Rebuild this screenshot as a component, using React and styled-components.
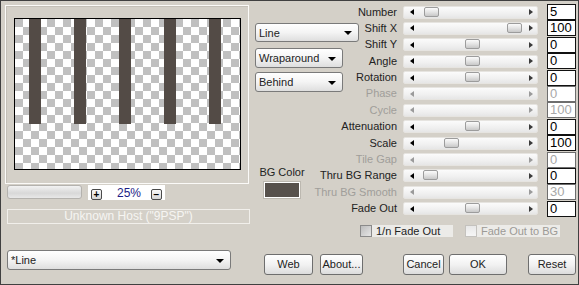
import React from "react";
import styled, { createGlobalStyle } from "styled-components";

const GlobalStyle = createGlobalStyle`
  html, body { margin: 0; padding: 0; background: #d4d0c8; }
  body {
    font-family: "Liberation Sans", Arial, sans-serif;
    font-size: 11px;
    color: #000;
  }
  * { box-sizing: border-box; }
`;

const Window = styled.div`
  width: 579px;
  height: 285px;
  border: 1px solid #404040;
  background: #d4d0c8;
  padding: 3px 2px 0 4px;
  display: flex;
  flex-direction: column;
`;

const Top = styled.div`
  display: flex;
  height: 246px;
`;

// ---------- left: preview ----------

const LeftCol = styled.div`
  width: 246px;
  flex: none;
  padding-top: 1px;
  display: flex;
  flex-direction: column;
`;

const PreviewFrame = styled.div`
  width: 244px;
  height: 179px;
  border: 1px solid #fbfaf8;
  box-shadow: inset 1px 1px 0 #c4c0b8;
  padding: 12px 0 0 8px;
`;

const Canvas = styled.div`
  width: 227px;
  height: 152px;
  border: 1px solid #000;
  svg { display: block; }
`;

const ZoomRow = styled.div`
  display: flex;
  height: 15px;
  margin: 1px 0 0 2px;
`;

const ZoomTrack = styled.div`
  width: 75px;
  height: 14px;
  border: 1px solid #b4b2ae;
  border-radius: 3px;
  background: linear-gradient(#f2f2f2, #d8d8d8 60%, #e8e8e8);
`;

const ZoomBox = styled.div`
  width: 77px;
  margin-left: 6px;
  background: #fff;
  display: flex;
  align-items: center;
  padding-left: 3px;
`;

const TinyButton = styled.div`
  width: 11px;
  height: 11px;
  align-self: flex-end;
  border: 1px solid #4a4a4a;
  border-radius: 2px;
  background: linear-gradient(#fafafa, #d6d6d6);
  font-size: 10px;
  font-weight: bold;
  line-height: 9px;
  text-align: center;
`;

const ZoomValue = styled.span`
  color: #1c1c86;
  font-size: 12px;
  margin-left: 15px;
  width: 34px;
`;

const HostBox = styled.div`
  width: 243px;
  height: 15px;
  margin: 9px 0 0 2px;
  border: 1px solid #f1efeb;
  color: #f6f5f2;
  font-size: 12px;
  line-height: 13px;
  text-align: center;
`;

// ---------- middle: dropdowns / bg colour ----------

const MidCol = styled.div`
  width: 105px;
  flex: none;
  margin-left: 4px;
  padding-top: 19px;
  display: flex;
  flex-direction: column;
  align-items: flex-start;
`;

const Dropdown = styled.div`
  width: ${(p) => p.$w}px;
  height: ${(p) => p.$h || 20}px;
  margin-top: ${(p) => p.$mt || 0}px;
  border: 1px solid #7a7a7a;
  border-radius: 3px;
  background: linear-gradient(#ffffff, #f4f4f4 50%, #dedede);
  display: flex;
  align-items: center;
  justify-content: space-between;
  padding: 0 6px 0 3px;
  font-size: 11px;
  color: #222;
  white-space: nowrap;
`;

const DownArrow = styled.span`
  width: 0;
  height: 0;
  border-left: 4px solid transparent;
  border-right: 4px solid transparent;
  border-top: 4px solid #000;
  margin-top: 1px;
`;

const BgGroup = styled.div`
  width: 40px;
  margin: 74px 0 0 7px;
  display: flex;
  flex-direction: column;
  align-items: center;
`;

const BgLabel = styled.div`
  font-size: 11px;
  line-height: 13px;
  color: #222;
  white-space: nowrap;
`;

const Swatch = styled.div`
  width: 36px;
  height: 16px;
  margin-top: 3px;
  border: 1px solid #fff;
  box-shadow: 0 0 0 1px #bcb8b0;
  background: ${(p) => p.$color};
`;

// ---------- right: parameters ----------

const ParamCol = styled.div`
  width: 216px;
  flex: none;
  display: flex;
  flex-direction: column;
`;

const ParamGrid = styled.div`
  display: grid;
  grid-template-columns: 37px 141px 38px;
  grid-template-rows: repeat(13, 16px);
  row-gap: 0.4px;
`;

const Label = styled.div`
  justify-self: end;
  align-self: center;
  white-space: nowrap;
  font-size: 11px;
  line-height: 13px;
  color: ${(p) => (p.$disabled ? "#a09e9a" : "#222")};
`;

const Track = styled.div`
  position: relative;
  justify-self: end;
  align-self: center;
  width: 135px;
  height: 13px;
  border: 1px solid #e6e4e0;
  border-radius: 2px;
  background: linear-gradient(#fbfbfb, #f0f0f0 60%, #e6e6e6);
  display: flex;
  align-items: center;
  justify-content: space-between;
  padding: 0 4px 0 6px;
`;

const ArrowL = styled.span`
  width: 0;
  height: 0;
  border-top: 3px solid transparent;
  border-bottom: 3px solid transparent;
  border-right: 4px solid ${(p) => (p.$disabled ? "#9a9a9a" : "#000")};
`;

const ArrowR = styled.span`
  width: 0;
  height: 0;
  border-top: 3px solid transparent;
  border-bottom: 3px solid transparent;
  border-left: 4px solid ${(p) => (p.$disabled ? "#9a9a9a" : "#3a3a3a")};
`;

const Thumb = styled.div`
  position: absolute;
  top: 0;
  width: 15px;
  height: 10px;
  border: 1px solid #9c9c9c;
  border-radius: 2px;
  background: linear-gradient(#fbfbfb, #e4e4e4 50%, #c8c8c8);
`;

const Field = styled.div`
  justify-self: end;
  align-self: center;
  width: 29px;
  height: 16px;
  background: #fff;
  border: 1px solid ${(p) => (p.$disabled ? "#6e6e6e" : "#111")};
  color: ${(p) => (p.$disabled ? "#a8a8a8" : "#000")};
  font-size: 13px;
  line-height: 14px;
  padding-left: 2px;
`;

const CheckRow = styled.div`
  display: flex;
  margin-top: 8px;
`;

const CheckItem = styled.div`
  width: ${(p) => p.$w}px;
  height: 12px;
  margin-left: ${(p) => p.$ml || 0}px;
  background: #ecebe8;
  display: flex;
  align-items: center;
  font-size: 11px;
  color: ${(p) => (p.$disabled ? "#9c9a96" : "#222")};
  white-space: nowrap;
`;

const Box = styled.span`
  width: 12px;
  height: 12px;
  flex: none;
  margin-right: 4px;
  border: 1px solid ${(p) => (p.$disabled ? "#c4c2be" : "#8a8a8a")};
  background: ${(p) =>
    p.$disabled
      ? "linear-gradient(#e8e8e8, #f6f6f6)"
      : "linear-gradient(135deg, #bcbcbc, #e6e6e6)"};
`;

// ---------- bottom ----------

const Bottom = styled.div`
  display: flex;
  align-items: flex-start;
  padding-left: 2px;
`;

const Button = styled.div`
  width: ${(p) => p.$w}px;
  height: 21px;
  margin-top: 4px;
  margin-left: ${(p) => p.$ml}px;
  border: 1px solid #6e6e6e;
  border-radius: 3px;
  background: linear-gradient(#ffffff, #f2f2f2 50%, #dcdcdc);
  font-size: 11px;
  color: #222;
  line-height: 19px;
  text-align: center;
`;

const params = [
  { label: "Number", value: "5", pos: 0.012 },
  { label: "Shift X", value: "100", pos: 1 },
  { label: "Shift Y", value: "0", pos: 0.5 },
  { label: "Angle", value: "0", pos: 0.5 },
  { label: "Rotation", value: "0", pos: 0.5 },
  { label: "Phase", value: "0", disabled: true },
  { label: "Cycle", value: "100", disabled: true },
  { label: "Attenuation", value: "0", pos: 0.5 },
  { label: "Scale", value: "100", pos: 0.25 },
  { label: "Tile Gap", value: "0", disabled: true },
  { label: "Thru BG Range", value: "0", pos: 0 },
  { label: "Thru BG Smooth", value: "30", disabled: true },
  { label: "Fade Out", value: "0", pos: 0.5 },
];

const bars = [14, 59, 104, 149, 194];

const Preview = () => (
  <Canvas>
    <svg width="225" height="150" viewBox="0 0 225 150">
      <defs>
        <pattern id="chk" width="16" height="16" patternUnits="userSpaceOnUse">
          <rect width="16" height="16" fill="#ffffff" />
          <rect width="8" height="8" fill="#c0c0c0" />
          <rect x="8" y="8" width="8" height="8" fill="#c0c0c0" />
        </pattern>
      </defs>
      <rect width="225" height="150" fill="url(#chk)" />
      {bars.map((x) => (
        <rect key={x} x={x} y="0" width="12" height="105" fill="#534b46" />
      ))}
    </svg>
  </Canvas>
);

const App = () => {
  return (
    <>
      <GlobalStyle />
      <Window>
        <Top>
          <LeftCol>
            <PreviewFrame>
              <Preview />
            </PreviewFrame>
            <ZoomRow>
              <ZoomTrack />
              <ZoomBox>
                <TinyButton>+</TinyButton>
                <ZoomValue>25%</ZoomValue>
                <TinyButton>−</TinyButton>
              </ZoomBox>
            </ZoomRow>
            <HostBox>Unknown Host ("9PSP")</HostBox>
          </LeftCol>

          <MidCol>
            <Dropdown $w={104} $h={19}>
              Line <DownArrow />
            </Dropdown>
            <Dropdown $w={88} $mt={6}>
              Wraparound <DownArrow />
            </Dropdown>
            <Dropdown $w={88} $mt={4}>
              Behind <DownArrow />
            </Dropdown>
            <BgGroup>
              <BgLabel>BG Color</BgLabel>
              <Swatch $color="#57514c" />
            </BgGroup>
          </MidCol>

          <ParamCol>
            <ParamGrid>
              {params.map((p) => (
                <React.Fragment key={p.label}>
                  <Label $disabled={p.disabled}>{p.label}</Label>
                  <Track>
                    <ArrowL $disabled={p.disabled} />
                    {!p.disabled && <Thumb style={{ left: 19 + p.pos * 84 }} />}
                    <ArrowR $disabled={p.disabled} />
                  </Track>
                  <Field $disabled={p.disabled}>{p.value}</Field>
                </React.Fragment>
              ))}
            </ParamGrid>
            <CheckRow>
              <CheckItem $w={93}>
                <Box />1/n Fade Out
              </CheckItem>
              <CheckItem $w={95} $ml={12} $disabled>
                <Box $disabled />Fade Out to BG
              </CheckItem>
            </CheckRow>
          </ParamCol>
        </Top>

        <Bottom>
          <Dropdown $w={224}>
            *Line <DownArrow />
          </Dropdown>
          <Button $w={49} $ml={33}>Web</Button>
          <Button $w={43} $ml={7}>About...</Button>
          <Button $w={41} $ml={40}>Cancel</Button>
          <Button $w={58} $ml={5}>OK</Button>
          <Button $w={48} $ml={21}>Reset</Button>
        </Bottom>
      </Window>
    </>
  );
};

export default App;
